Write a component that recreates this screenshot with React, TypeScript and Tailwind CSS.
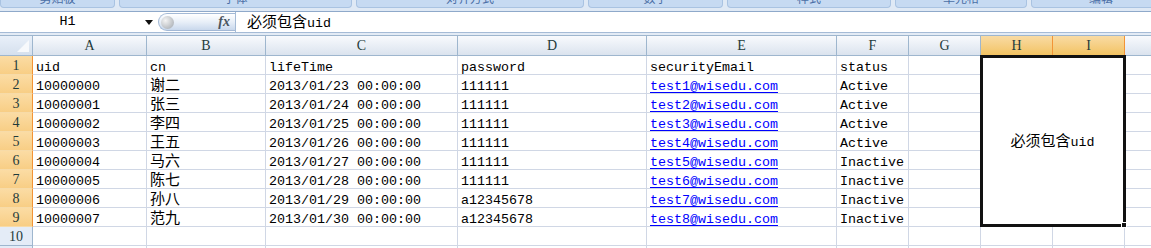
import type { ReactNode } from "react";

const cjk = /([\u4e00-\u9fff]+)/;

function Txt({ s }: { s: string }) {
  const parts = s.split(cjk);
  return (
    <span>
      {parts.map((p, i) =>
        cjk.test(p) ? (
          <span key={i} className="text-[15px] leading-[12px] font-['Noto_Sans_CJK_SC',sans-serif]">
            {p}
          </span>
        ) : (
          p
        )
      )}
    </span>
  );
}

const tabs = [
  { w: "w-[115px]", label: "剪贴板" },
  { w: "w-[233px]", label: "字体" },
  { w: "w-[228px]", label: "对齐方式" },
  { w: "w-[135px]", label: "数字" },
  { w: "w-[164px]", label: "样式" },
  { w: "w-[132px]", label: "单元格" },
  { w: "w-[140px]", label: "编辑" },
];

const letters = ["A", "B", "C", "D", "E", "F", "G", "H", "I", "J"];

const rows: string[][] = [
  ["uid", "cn", "lifeTime", "password", "securityEmail", "status"],
  ["10000000", "谢二", "2013/01/23 00:00:00", "111111", "test1@wisedu.com", "Active"],
  ["10000001", "张三", "2013/01/24 00:00:00", "111111", "test2@wisedu.com", "Active"],
  ["10000002", "李四", "2013/01/25 00:00:00", "111111", "test3@wisedu.com", "Active"],
  ["10000003", "王五", "2013/01/26 00:00:00", "111111", "test4@wisedu.com", "Active"],
  ["10000004", "马六", "2013/01/27 00:00:00", "111111", "test5@wisedu.com", "Inactive"],
  ["10000005", "陈七", "2013/01/28 00:00:00", "111111", "test6@wisedu.com", "Inactive"],
  ["10000006", "孙八", "2013/01/29 00:00:00", "a12345678", "test7@wisedu.com", "Inactive"],
  ["10000007", "范九", "2013/01/30 00:00:00", "a12345678", "test8@wisedu.com", "Inactive"],
];

function Cell({ children }: { children?: ReactNode }) {
  return (
    <div className="flex items-end overflow-visible whitespace-nowrap border-r border-b border-[#d0d7e5] pl-[3px] leading-[12px]">
      {children}
    </div>
  );
}

function RowHead({ n, hot }: { n: number; hot: boolean }) {
  return (
    <div
      className={
        hot
          ? "flex items-center justify-center border-r border-b border-r-[#f29436] border-b-[#f7dba8] bg-gradient-to-b from-[#fbdca4] to-[#f8ce85] font-['Liberation_Serif',serif] text-[14px] text-[#1f3b3b]"
          : "flex items-center justify-center border-r border-b border-[#9eb6ce] bg-[#e4ecf7] font-['Liberation_Serif',serif] text-[14px] text-[#1f3b3b]"
      }
    >
      {n}
    </div>
  );
}

export default function App() {
  return (
    <div className="h-[248px] w-[1151px] overflow-hidden bg-white font-['Liberation_Mono','Noto_Sans_CJK_SC',monospace] text-[13.33px] text-black">
      {/* Ribbon group labels (bottom edge only) */}
      <div className="flex h-[12px] gap-[4px] overflow-hidden border-b border-[#8fa9ca] bg-[#dfe9f5]">
        {tabs.map((t) => (
          <div
            key={t.label}
            className={`${t.w} h-[8px] shrink-0 overflow-hidden rounded-b-[4px] border border-t-0 border-[#a9c3e2] bg-[#c6daf2] text-center`}
          >
            <div className="-mt-[9px] font-['Noto_Sans_CJK_SC',sans-serif] text-[12px] leading-[14px] text-[#4b6fa6]">
              {t.label}
            </div>
          </div>
        ))}
      </div>

      {/* Formula bar */}
      <div className="flex h-[21px] items-center border-b border-[#a5bbd6] bg-white">
        <div className="flex h-full w-[158px] items-center">
          <div className="flex-1 pr-[10px] text-center leading-[14px]">H1</div>
          <svg width="8" height="5" viewBox="0 0 8 5" className="mr-[5px]">
            <path d="M0 0h8L4 5z" fill="#111" />
          </svg>
        </div>
        <div className="flex h-[18px] w-[77px] items-center justify-between rounded-l-full border border-r-0 border-[#a3b9d6] bg-gradient-to-b from-[#ffffff] via-[#e8eff8] to-[#c9d8ec] pl-[2px] pr-[5px]">
          <div className="h-[13px] w-[13px] rounded-full bg-[radial-gradient(circle_at_35%_35%,#f4f4f4,#9ea4ab)]" />
          <span className="font-['Liberation_Serif',serif] text-[14px] font-bold italic leading-[14px] text-[#4a5560]">
            fx
          </span>
        </div>
        <div className="h-full border-l border-[#a5bbd6]" />
        <div className="pl-[11px] leading-[12px]">
          <Txt s="必须包含uid" />
        </div>
      </div>
      <div className="h-[3px] border-b border-[#9eb6ce] bg-[#e3ebf5]" />

      {/* Sheet grid */}
      <div className="grid grid-cols-[33px_114px_119px_192px_189px_190px_72px_72px_72px_72px_72px] grid-rows-[20px_repeat(11,19px)]">
        {/* corner */}
        <div className="relative border-r border-b border-[#9eb6ce] bg-gradient-to-b from-[#e9f0f9] to-[#d5e0ee]">
          <svg width="12" height="12" viewBox="0 0 12 12" className="absolute right-[3px] bottom-[3px]">
            <path d="M12 0V12H0z" fill="#f7f9fc" />
          </svg>
        </div>
        {letters.map((l) => (
          <div
            key={l}
            className={
              l === "H" || l === "I"
                ? "flex items-center justify-center border-r border-b border-[#f29436] bg-gradient-to-b from-[#f9dba3] to-[#f2c362] font-['Liberation_Serif',serif] text-[14px] text-[#1f3b3b]"
                : "flex items-center justify-center border-r border-b border-[#9eb6ce] bg-gradient-to-b from-[#f8fafd] to-[#dbe3ee] font-['Liberation_Serif',serif] text-[14px] text-[#1f3b3b]"
            }
          >
            {l}
          </div>
        ))}

        {rows.map((r, ri) => (
          <RowLine key={ri} n={ri + 1} r={r} />
        ))}

        <RowHead n={10} hot={false} />
        {letters.map((l) => (
          <Cell key={l} />
        ))}
        <RowHead n={11} hot={false} />
        {letters.map((l) => (
          <Cell key={l} />
        ))}
      </div>
    </div>
  );
}

function RowLine({ n, r }: { n: number; r: string[] }) {
  return (
    <>
      <RowHead n={n} hot />
      {r.map((v, ci) => (
        <Cell key={ci}>
          {ci === 4 && n > 1 ? (
            <span className="text-[#0000ff] underline decoration-[#0000ff] underline-offset-[2px]">{v}</span>
          ) : (
            <Txt s={v} />
          )}
        </Cell>
      ))}
      <Cell />
      {n === 1 && (
        <div className="relative col-span-2 row-span-9 flex items-center justify-center border-r border-b border-[#d0d7e5] bg-white leading-[12px]">
          <Txt s="必须包含uid" />
          <div className="absolute -top-[1px] -left-[1px] -right-[2px] -bottom-[1px] border-[3px] border-[#111]">
            <div className="absolute -right-[4px] -bottom-[4px] h-[6px] w-[6px] border border-white bg-[#111]" />
          </div>
        </div>
      )}
      <Cell />
    </>
  );
}
